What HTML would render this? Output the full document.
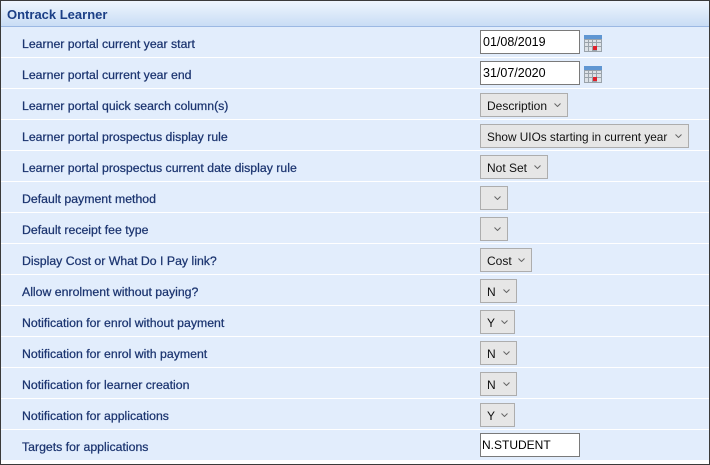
<!DOCTYPE html>
<html><head><meta charset="utf-8"><style>
*{margin:0;padding:0;box-sizing:border-box}
body{width:710px;height:465px;overflow:hidden;background:#fff;font-family:"Liberation Sans",sans-serif}
.win{position:absolute;left:0;top:0;width:710px;height:465px;border:1px solid #3a3a3a;background:#fff}
.hdr{position:absolute;left:0;top:0;width:708px;height:26px;background:linear-gradient(#eef5fd,#c9ddf5);border-bottom:1px solid #9bb8e3}
.hdr span{position:absolute;left:6px;top:6px;font-size:13px;font-weight:bold;color:#1b3f86}
.row{position:absolute;left:0;width:708px;height:30px;background:#e2edfc}
.lbl{position:absolute;left:21px;top:10px;font-size:12.3px;color:#1c3570;-webkit-text-stroke:0.25px #1c3570}
.inp{position:absolute;left:479px;top:3px;width:100px;height:24px;background:#fff;border:1px solid #7a7a7a;font-size:12.5px;padding:4px 0 0 2px;color:#000}
.sel{position:absolute;left:479px;top:4px;height:24px;background:#e6e6e6;border:1px solid #adadad;font-size:12px;color:#111;padding:5px 0 0 6px;white-space:nowrap}
.sel svg{position:absolute;right:6px;top:9px}
.cal{position:absolute;left:583px;top:8px}
</style></head><body><div class="win">
<div class="hdr"><span>Ontrack Learner</span></div>

<div class="row" style="top:26px;height:30px"><div class="lbl">Learner portal current year start</div><div class="inp">01/08/2019</div>
<svg class="cal" width="18" height="17" viewBox="0 0 18 17"><rect x="0" y="0" width="18" height="17" fill="#9aa3ab"/><rect x="0" y="0" width="18" height="4" fill="#5f96d2"/><g fill="#dde2e7"><rect x="1" y="5" width="3" height="2"/><rect x="5" y="5" width="3" height="2"/><rect x="9" y="5" width="3" height="2"/><rect x="13" y="5" width="4" height="2"/><rect x="1" y="8" width="3" height="3"/><rect x="5" y="8" width="3" height="3"/><rect x="9" y="8" width="3" height="3"/><rect x="13" y="8" width="4" height="3"/><rect x="1" y="12" width="3" height="4"/><rect x="5" y="12" width="3" height="4"/><rect x="13" y="12" width="4" height="4"/></g><rect x="9" y="11" width="4" height="4" fill="#e0202a"/></svg></div>

<div class="row" style="top:57px"><div class="lbl">Learner portal current year end</div><div class="inp">31/07/2020</div>
<svg class="cal" width="18" height="17" viewBox="0 0 18 17"><rect x="0" y="0" width="18" height="17" fill="#9aa3ab"/><rect x="0" y="0" width="18" height="4" fill="#5f96d2"/><g fill="#dde2e7"><rect x="1" y="5" width="3" height="2"/><rect x="5" y="5" width="3" height="2"/><rect x="9" y="5" width="3" height="2"/><rect x="13" y="5" width="4" height="2"/><rect x="1" y="8" width="3" height="3"/><rect x="5" y="8" width="3" height="3"/><rect x="9" y="8" width="3" height="3"/><rect x="13" y="8" width="4" height="3"/><rect x="1" y="12" width="3" height="4"/><rect x="5" y="12" width="3" height="4"/><rect x="13" y="12" width="4" height="4"/></g><rect x="9" y="11" width="4" height="4" fill="#e0202a"/></svg></div>

<div class="row" style="top:88px"><div class="lbl">Learner portal quick search column(s)</div><div class="sel" style="width:88px">Description<svg width="7" height="4"><path d="M0.5 0.5L3.5 3.5L6.5 0.5" fill="none" stroke="#666"/></svg></div></div>
<div class="row" style="top:119px"><div class="lbl">Learner portal prospectus display rule</div><div class="sel" style="width:209px;font-size:11.8px">Show UIOs starting in current year<svg width="7" height="4"><path d="M0.5 0.5L3.5 3.5L6.5 0.5" fill="none" stroke="#666"/></svg></div></div>
<div class="row" style="top:150px"><div class="lbl">Learner portal prospectus current date display rule</div><div class="sel" style="width:68px">Not Set<svg width="7" height="4"><path d="M0.5 0.5L3.5 3.5L6.5 0.5" fill="none" stroke="#666"/></svg></div></div>
<div class="row" style="top:181px"><div class="lbl">Default payment method</div><div class="sel" style="width:28px"><svg width="7" height="4"><path d="M0.5 0.5L3.5 3.5L6.5 0.5" fill="none" stroke="#666"/></svg></div></div>
<div class="row" style="top:212px"><div class="lbl">Default receipt fee type</div><div class="sel" style="width:28px"><svg width="7" height="4"><path d="M0.5 0.5L3.5 3.5L6.5 0.5" fill="none" stroke="#666"/></svg></div></div>
<div class="row" style="top:243px"><div class="lbl">Display Cost or What Do I Pay link?</div><div class="sel" style="width:52px">Cost<svg width="7" height="4"><path d="M0.5 0.5L3.5 3.5L6.5 0.5" fill="none" stroke="#666"/></svg></div></div>
<div class="row" style="top:274px"><div class="lbl">Allow enrolment without paying?</div><div class="sel" style="width:37px">N<svg width="7" height="4"><path d="M0.5 0.5L3.5 3.5L6.5 0.5" fill="none" stroke="#666"/></svg></div></div>
<div class="row" style="top:305px"><div class="lbl">Notification for enrol without payment</div><div class="sel" style="width:35px">Y<svg width="7" height="4"><path d="M0.5 0.5L3.5 3.5L6.5 0.5" fill="none" stroke="#666"/></svg></div></div>
<div class="row" style="top:336px"><div class="lbl">Notification for enrol with payment</div><div class="sel" style="width:37px">N<svg width="7" height="4"><path d="M0.5 0.5L3.5 3.5L6.5 0.5" fill="none" stroke="#666"/></svg></div></div>
<div class="row" style="top:367px"><div class="lbl">Notification for learner creation</div><div class="sel" style="width:37px">N<svg width="7" height="4"><path d="M0.5 0.5L3.5 3.5L6.5 0.5" fill="none" stroke="#666"/></svg></div></div>
<div class="row" style="top:398px"><div class="lbl">Notification for applications</div><div class="sel" style="width:35px">Y<svg width="7" height="4"><path d="M0.5 0.5L3.5 3.5L6.5 0.5" fill="none" stroke="#666"/></svg></div></div>
<div class="row" style="top:429px"><div class="lbl">Targets for applications</div><div class="inp" style="font-size:12px;padding-left:1px">N.STUDENT</div></div>
</div></body></html>
